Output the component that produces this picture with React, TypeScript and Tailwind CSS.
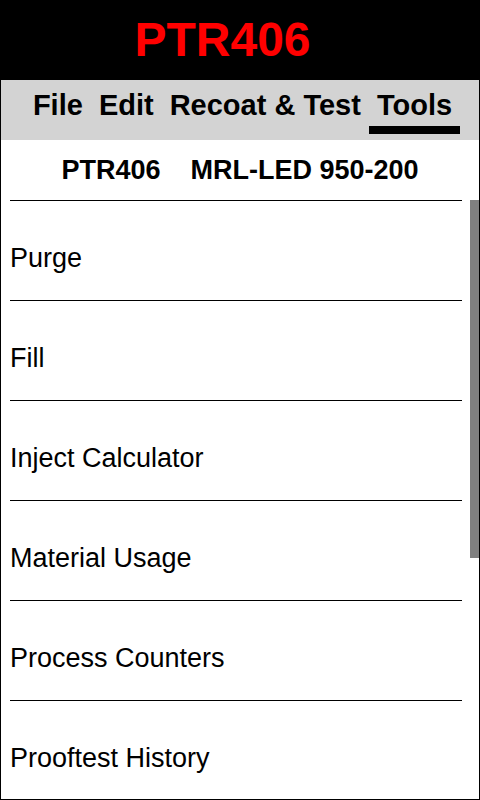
import React from "react";

const navItems = [
  { label: "File", active: false },
  { label: "Edit", active: false },
  { label: "Recoat & Test", active: false },
  { label: "Tools", active: true },
];

const tools = [
  "Purge",
  "Fill",
  "Inject Calculator",
  "Material Usage",
  "Process Counters",
  "Prooftest History",
  "Maintenance",
  "Diagnostics",
  "Calibration",
  "About",
];

export default function App() {
  return (
    <div
      className="flex h-[800px] w-[480px] flex-col bg-white text-black"
      style={{ fontFamily: '"Liberation Sans", Arial, sans-serif' }}
    >
      <header className="flex h-[80px] shrink-0 items-center justify-center bg-black pr-[35px]">
        <h1 className="text-[48px] font-bold leading-none text-[#ff0000]">PTR406</h1>
      </header>
      <div className="flex min-h-0 flex-1 flex-col border-x border-b border-black">
        <nav className="flex h-[60px] shrink-0 justify-center bg-[#d3d3d3] pl-[5px] pt-[9px]">
          {navItems.map((item) => (
            <div key={item.label} className="flex flex-col px-[8px]">
              <span className="whitespace-nowrap text-[29px] font-bold leading-[33px]">
                {item.label}
              </span>
              {item.active ? (
                <span className="-mx-[8px] mt-[4px] block h-[8px] bg-black" />
              ) : null}
            </div>
          ))}
        </nav>
        <div className="flex h-[60px] shrink-0 items-center justify-center">
          <span className="whitespace-pre text-[27px] font-bold leading-[31px]">
            {"PTR406    MRL-LED 950-200"}
          </span>
        </div>
        <div className="relative min-h-0 flex-1 overflow-hidden">
          <ul className="ml-[9px] mr-[17px] border-t border-black">
            {tools.map((t) => (
              <li
                key={t}
                className="h-[100px] border-b border-black pt-[42px] text-[27px] leading-[31px]"
              >
                {t}
              </li>
            ))}
          </ul>
          <div className="absolute right-0 top-0 h-[358px] w-[9px] bg-[#808080]" />
        </div>
      </div>
    </div>
  );
}
